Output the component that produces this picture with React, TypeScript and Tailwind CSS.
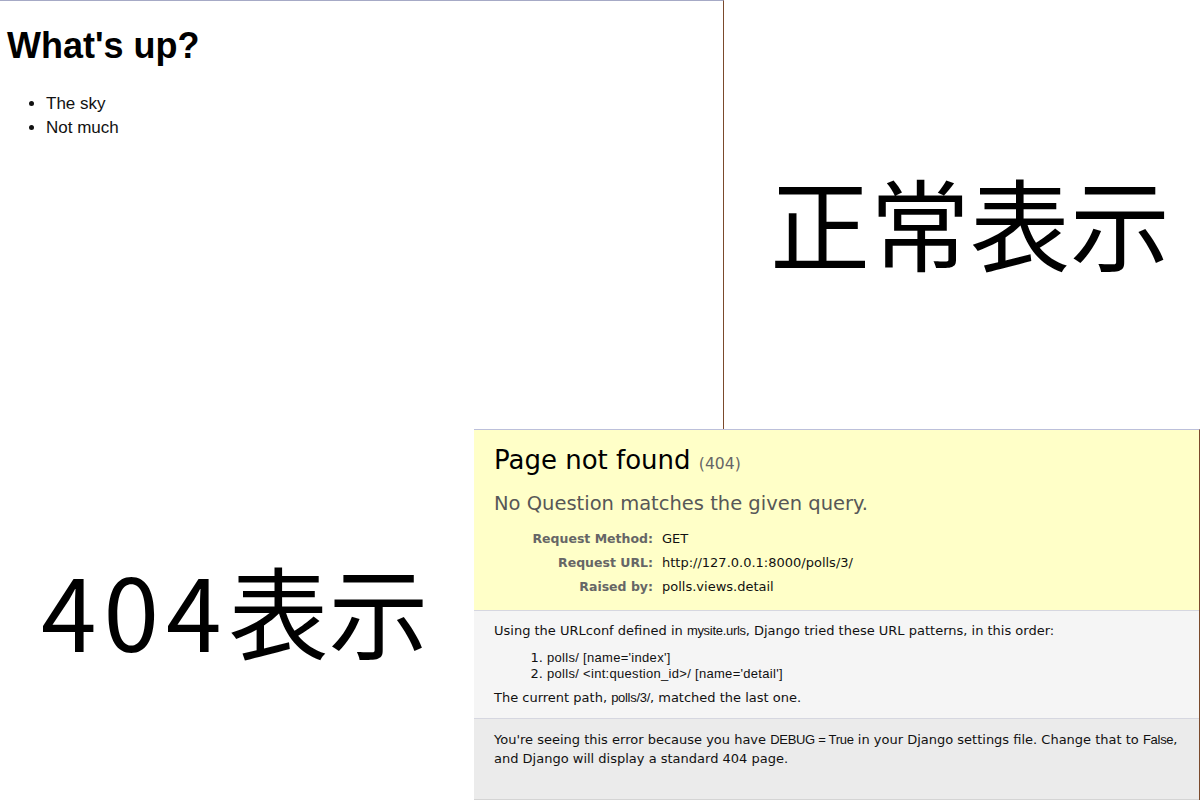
import React from "react";

const sans = "font-['Liberation_Sans','Noto_Sans_CJK_JP',sans-serif]";
const body = "font-['DejaVu_Sans','Liberation_Sans',sans-serif]";
const code = "font-['Liberation_Sans',sans-serif] tracking-[-0.3px]";
const listCode = "font-['Liberation_Sans',sans-serif] tracking-[0.3px]";
const jp = "font-['Noto_Sans_CJK_JP',sans-serif]";

const PollsWindow = () => (
  <div className="absolute left-0 top-0 w-[724px] h-[429px] border-t border-r border-t-[#a6aac6] border-r-[#7b4a2c] bg-white text-black">
    <h1 className={`${sans} pl-[7px] pt-[25px] text-[36px] leading-[40px] font-bold`}>What's up?</h1>
    <ul className={`${sans} list-disc pl-[46px] mt-[26px] text-[17px] leading-[24px] text-[#111]`}>
      <li>The sky</li>
      <li>Not much</li>
    </ul>
  </div>
);

const rows = [
  ["Request Method:", "GET"],
  ["Request URL:", "http://127.0.0.1:8000/polls/3/"],
  ["Raised by:", "polls.views.detail"],
];

const NotFoundWindow = () => (
  <div className={`${body} absolute left-[474px] top-[429px] w-[726px] h-[371px] flex flex-col border-t border-r border-t-[#bcc0da] border-r-[#7b4a2c] text-[13px] text-black`}>
    {/* summary */}
    <div className="bg-[#ffffc8] border-b border-[#d6d7e0] px-5 pt-[15px] pb-[11px]">
      <h1 className="text-[26px] leading-[30px] font-normal">
        Page not found <span className="text-[15.6px] leading-none text-[#666]">(404)</span>
      </h1>
      <pre className={`${body} mt-[17px] text-[19.5px] leading-[24px] text-[#575757]`}>
        No Question matches the given query.
      </pre>
      <div className="mt-[11px] grid grid-cols-[162px_1fr]">
        {rows.map(([k, v]) => (
          <React.Fragment key={k}>
            <div className="pr-[3px] text-right text-[12.5px] font-bold text-[#666] leading-[24px]">{k}</div>
            <div className="pl-[6px] leading-[24px] text-[#111]">{v}</div>
          </React.Fragment>
        ))}
      </div>
    </div>

    {/* info */}
    <div className="bg-[#f5f5f5] border-b border-[#d6d7e0] px-5 pt-[12px] pb-[12px] leading-[16px] text-[#111]">
      <p>
        Using the URLconf defined in <code className={code}>mysite.urls</code>, Django tried these URL patterns, in this order:
      </p>
      <ol className="list-decimal pl-[53px] mt-[11px]">
        <li>
          <code className={listCode}>polls/ [name='index']</code>
        </li>
        <li>
          <code className={listCode}>{"polls/ <int:question_id>/ [name='detail']"}</code>
        </li>
      </ol>
      <p className="mt-[8px]">
        The current path, <code className={code}>polls/3/</code>, matched the last one.
      </p>
    </div>

    {/* explanation */}
    <div className="flex-1 bg-[#ebebeb] border-b border-[#d4d4d4] px-5 pt-[11px] leading-[19px] text-[#111]">
      <p>
        You're seeing this error because you have <code className={code}>DEBUG = True</code> in your Django settings file. Change that to <code className={code}>False</code>,
        <br />
        and Django will display a standard 404 page.
      </p>
    </div>
  </div>
);

export default function App() {
  return (
    <div className="relative w-[1200px] h-[800px] overflow-hidden bg-white">
      <PollsWindow />
      <div className={`${jp} absolute left-[770px] top-[171px] text-[100px] leading-none text-black`}>正常表示</div>
      <div className={`${jp} absolute left-[41px] top-[559px] text-[100px] leading-none text-black`}>
        <span className="tracking-[7px]">404</span>表示
      </div>
      <NotFoundWindow />
    </div>
  );
}
